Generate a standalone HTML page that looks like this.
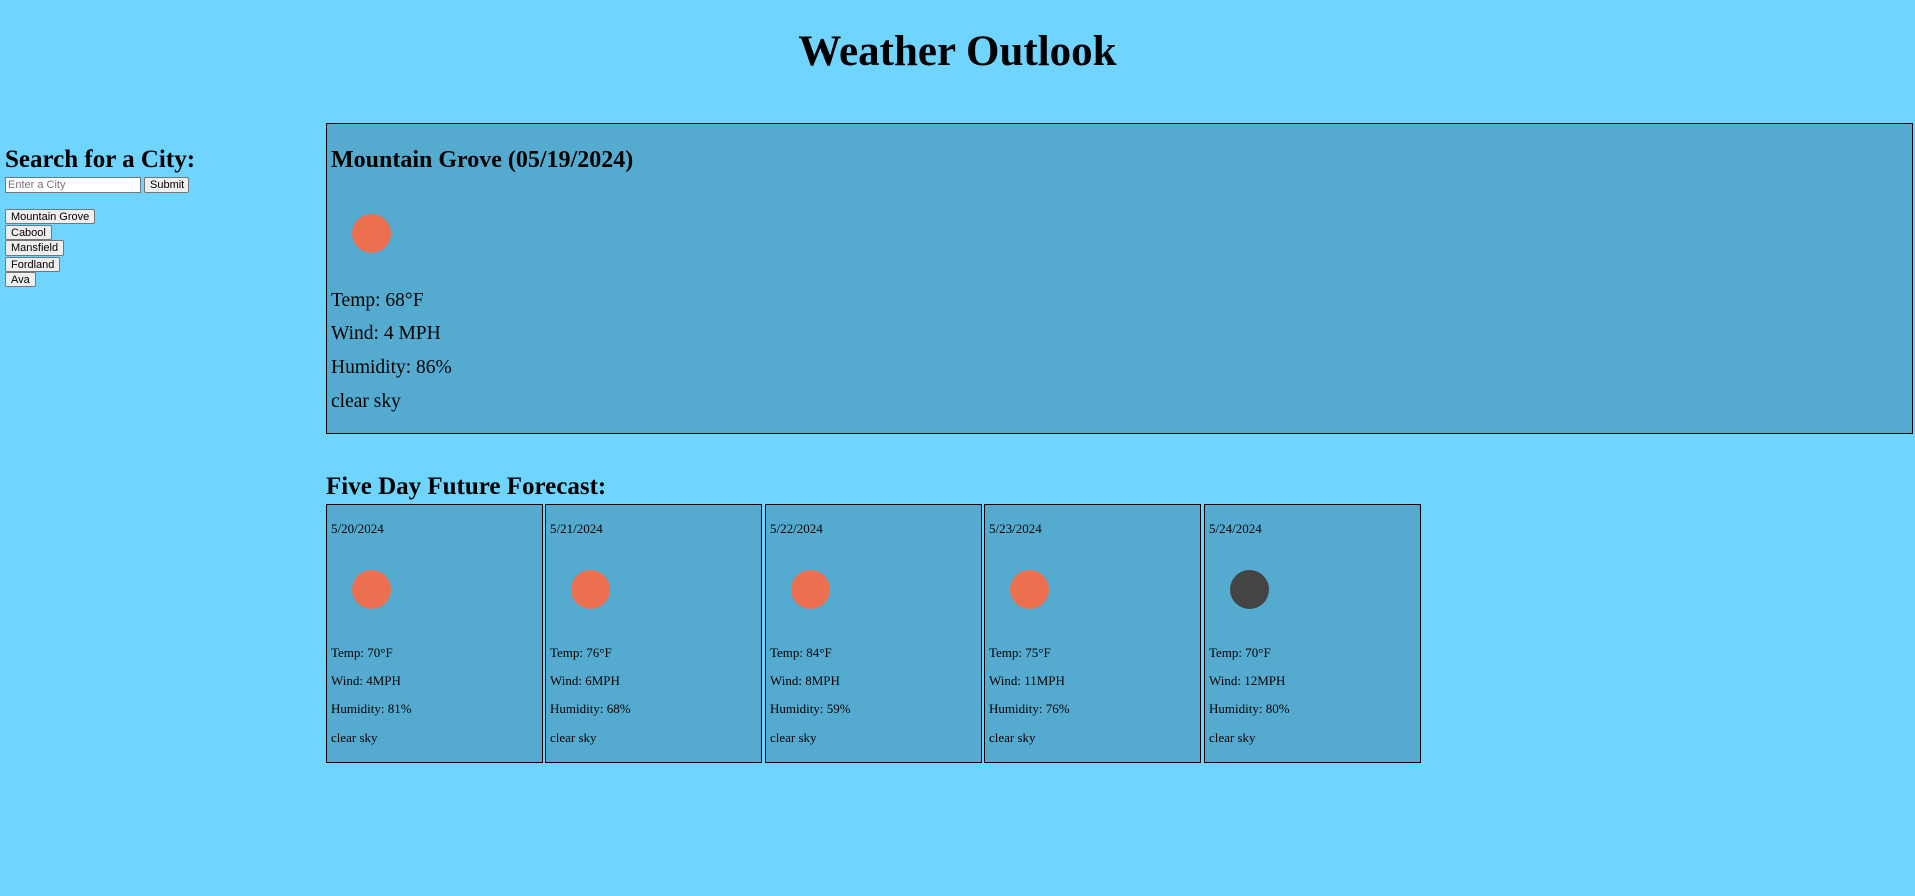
<!DOCTYPE html>
<html><head><meta charset="utf-8"><style>
*{margin:0;padding:0;box-sizing:border-box}
body{width:1915px;height:896px;background:#6fd4fe;position:relative;overflow:hidden;font-family:"Liberation Serif",serif;color:#000}
.a{position:absolute;line-height:1;white-space:nowrap}
.b{font-weight:bold}
.box{position:absolute;background:#55abcf;border:1px solid #000}
.sun{position:absolute;width:39px;height:39px;border-radius:50%;background:#ec6f50}
.btn{position:absolute;font-family:"Liberation Sans",sans-serif;font-size:11px;background:#efefef;border:1px solid #767676;border-radius:2px;line-height:14px;padding:0 5px;color:#000;white-space:nowrap}
.c{font-size:13px}
</style></head><body>
<div class="a b" style="left:0;width:1915px;text-align:center;top:30px;font-size:43px">Weather Outlook</div>

<div class="a b" style="left:5px;top:147px;font-size:25px">Search for a City:</div>
<div style="position:absolute;left:5px;top:177px;width:136px;height:16px;background:#fff;border:1px solid #767676;font-family:'Liberation Sans',sans-serif;font-size:11px;color:#757575;padding-left:2px;line-height:14px">Enter a City</div>
<div class="btn" style="left:144px;top:177px;height:16px;width:45px">Submit</div>
<div class="btn" style="left:5px;top:209px;height:15px">Mountain Grove</div>
<div class="btn" style="left:5px;top:225px;height:15px">Cabool</div>
<div class="btn" style="left:5px;top:240px;height:16px">Mansfield</div>
<div class="btn" style="left:5px;top:257px;height:15px">Fordland</div>
<div class="btn" style="left:5px;top:272px;height:15px">Ava</div>

<div class="box" style="left:326px;top:123px;width:1587px;height:311px"></div>
<div class="a b" style="left:331px;top:148px;font-size:24px">Mountain Grove (05/19/2024)</div>
<div class="sun" style="left:352px;top:214px"></div>
<div class="a" style="left:331px;top:291px;font-size:19.5px">Temp: 68°F</div>
<div class="a" style="left:331px;top:324px;font-size:19.5px">Wind: 4 MPH</div>
<div class="a" style="left:331px;top:358px;font-size:19.5px">Humidity: 86%</div>
<div class="a" style="left:331px;top:392px;font-size:19.5px">clear sky</div>

<div class="a b" style="left:326px;top:474px;font-size:25px">Five Day Future Forecast:</div>

<div class="box" style="left:326px;top:504px;width:217px;height:259px"></div>
<div class="a c" style="left:331px;top:522px">5/20/2024</div>
<div class="sun" style="left:352px;top:570px"></div>
<div class="a c" style="left:331px;top:646px">Temp: 70°F</div>
<div class="a c" style="left:331px;top:674px">Wind: 4MPH</div>
<div class="a c" style="left:331px;top:702px">Humidity: 81%</div>
<div class="a c" style="left:331px;top:731px">clear sky</div>

<div class="box" style="left:545px;top:504px;width:217px;height:259px"></div>
<div class="a c" style="left:550px;top:522px">5/21/2024</div>
<div class="sun" style="left:571px;top:570px"></div>
<div class="a c" style="left:550px;top:646px">Temp: 76°F</div>
<div class="a c" style="left:550px;top:674px">Wind: 6MPH</div>
<div class="a c" style="left:550px;top:702px">Humidity: 68%</div>
<div class="a c" style="left:550px;top:731px">clear sky</div>

<div class="box" style="left:765px;top:504px;width:217px;height:259px"></div>
<div class="a c" style="left:770px;top:522px">5/22/2024</div>
<div class="sun" style="left:791px;top:570px"></div>
<div class="a c" style="left:770px;top:646px">Temp: 84°F</div>
<div class="a c" style="left:770px;top:674px">Wind: 8MPH</div>
<div class="a c" style="left:770px;top:702px">Humidity: 59%</div>
<div class="a c" style="left:770px;top:731px">clear sky</div>

<div class="box" style="left:984px;top:504px;width:217px;height:259px"></div>
<div class="a c" style="left:989px;top:522px">5/23/2024</div>
<div class="sun" style="left:1010px;top:570px"></div>
<div class="a c" style="left:989px;top:646px">Temp: 75°F</div>
<div class="a c" style="left:989px;top:674px">Wind: 11MPH</div>
<div class="a c" style="left:989px;top:702px">Humidity: 76%</div>
<div class="a c" style="left:989px;top:731px">clear sky</div>

<div class="box" style="left:1204px;top:504px;width:217px;height:259px"></div>
<div class="a c" style="left:1209px;top:522px">5/24/2024</div>
<div class="sun" style="left:1230px;top:570px;background:#444"></div>
<div class="a c" style="left:1209px;top:646px">Temp: 70°F</div>
<div class="a c" style="left:1209px;top:674px">Wind: 12MPH</div>
<div class="a c" style="left:1209px;top:702px">Humidity: 80%</div>
<div class="a c" style="left:1209px;top:731px">clear sky</div>
</body></html>
